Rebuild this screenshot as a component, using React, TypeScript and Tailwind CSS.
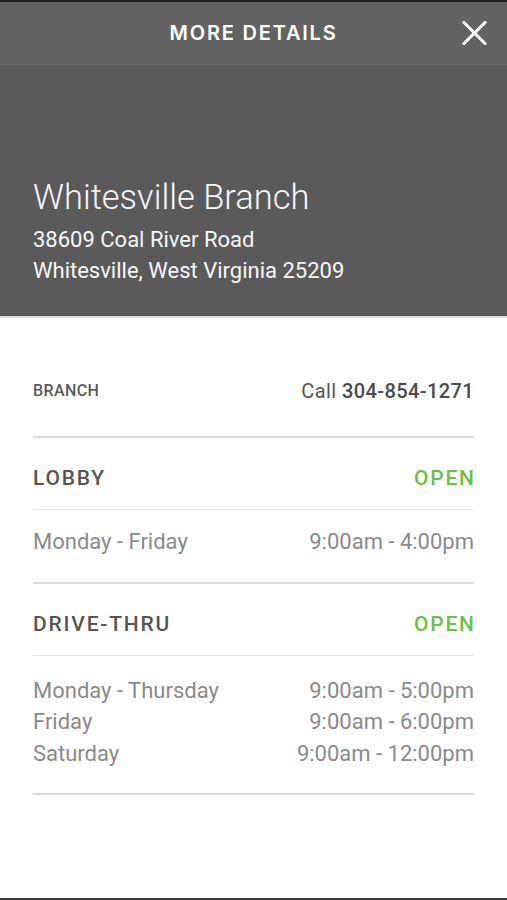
import { Fragment } from "react"

const lobbyHours = [{ days: "Monday - Friday", time: "9:00am - 4:00pm" }]

const driveHours = [
  { days: "Monday - Thursday", time: "9:00am - 5:00pm" },
  { days: "Friday", time: "9:00am - 6:00pm" },
  { days: "Saturday", time: "9:00am - 12:00pm" },
]

function CloseIcon() {
  return (
    <svg width="25" height="24" viewBox="0 0 25 24" fill="none" aria-hidden="true">
      <path d="M2 1.5 L23 22.5 M23 1.5 L2 22.5" stroke="#ffffff" strokeWidth="3" strokeLinecap="square" />
    </svg>
  )
}

function HoursSection({
  title,
  hours,
  rowsClass,
}: {
  title: string
  hours: { days: string; time: string }[]
  rowsClass: string
}) {
  return (
    <section>
      <div className="flex items-center justify-between pt-[26px] pb-[17px] leading-[28px] text-[21px] font-medium tracking-[1.8px]">
        <h3 className="text-[#555555]">{title}</h3>
        <span className="mr-[-1.8px] text-[#6cc04a]">OPEN</span>
      </div>
      <div className="h-px bg-[#e5e5e5]" />
      <div className={`grid grid-cols-[1fr_auto] text-[22px] leading-[31.5px] text-[#8a8a8a] ${rowsClass}`}>
        {hours.map((h) => (
          <Fragment key={h.days}>
            <span>{h.days}</span>
            <span className="text-right">{h.time}</span>
          </Fragment>
        ))}
      </div>
      <div className="h-[2px] bg-[#dcdcdc]" />
    </section>
  )
}

export default function App() {
  return (
    <div
      className="flex h-[900px] w-full flex-col border-t-2 border-b-2 border-t-[#1e1e1e] border-b-[#3c3c3c] bg-white"
      style={{ fontFamily: "Roboto, 'Noto Sans', sans-serif" }}
    >
      {/* top bar */}
      <header className="grid h-[63px] grid-cols-[1fr_auto_1fr] items-center border-b border-[#6e6e6e] bg-[#636363]">
        <span />
        <h1
          className="text-[20px] font-semibold tracking-[1.8px] text-white"
          style={{ fontFamily: "Inter, 'Liberation Sans', sans-serif" }}
        >
          MORE DETAILS
        </h1>
        <button className="justify-self-end pr-[20px]" aria-label="Close">
          <CloseIcon />
        </button>
      </header>

      {/* branch info */}
      <div className="flex h-[253px] flex-col justify-end border-b-2 border-[#e0e0e0] bg-[#5a5a5a] px-[33px] pb-[30px] text-[#f7f7f7]">
        <h2 className="text-[34.5px] font-light leading-[40px]">Whitesville Branch</h2>
        <p className="mt-[7px] text-[22px] leading-[31px]">38609 Coal River Road</p>
        <p className="text-[22px] leading-[31px]">Whitesville, West Virginia 25209</p>
      </div>

      <div className="px-[33px]">
        <div className="flex items-center justify-between pt-[61px] pb-[33px] leading-[24px]">
          <span className="text-[16px] font-medium tracking-[0.4px] text-[#5a5a5a]">BRANCH</span>
          <span className="text-[20px] tracking-[0.4px] text-[#555555]">
            Call <span className="font-medium text-[#4a4a4a]">304-854-1271</span>
          </span>
        </div>
        <div className="h-[2px] bg-[#dcdcdc]" />

        <HoursSection title="LOBBY" hours={lobbyHours} rowsClass="pt-[16px] pb-[24px]" />
        <HoursSection title="DRIVE-THRU" hours={driveHours} rowsClass="pt-[19px] pb-[24px]" />
      </div>
    </div>
  )
}
